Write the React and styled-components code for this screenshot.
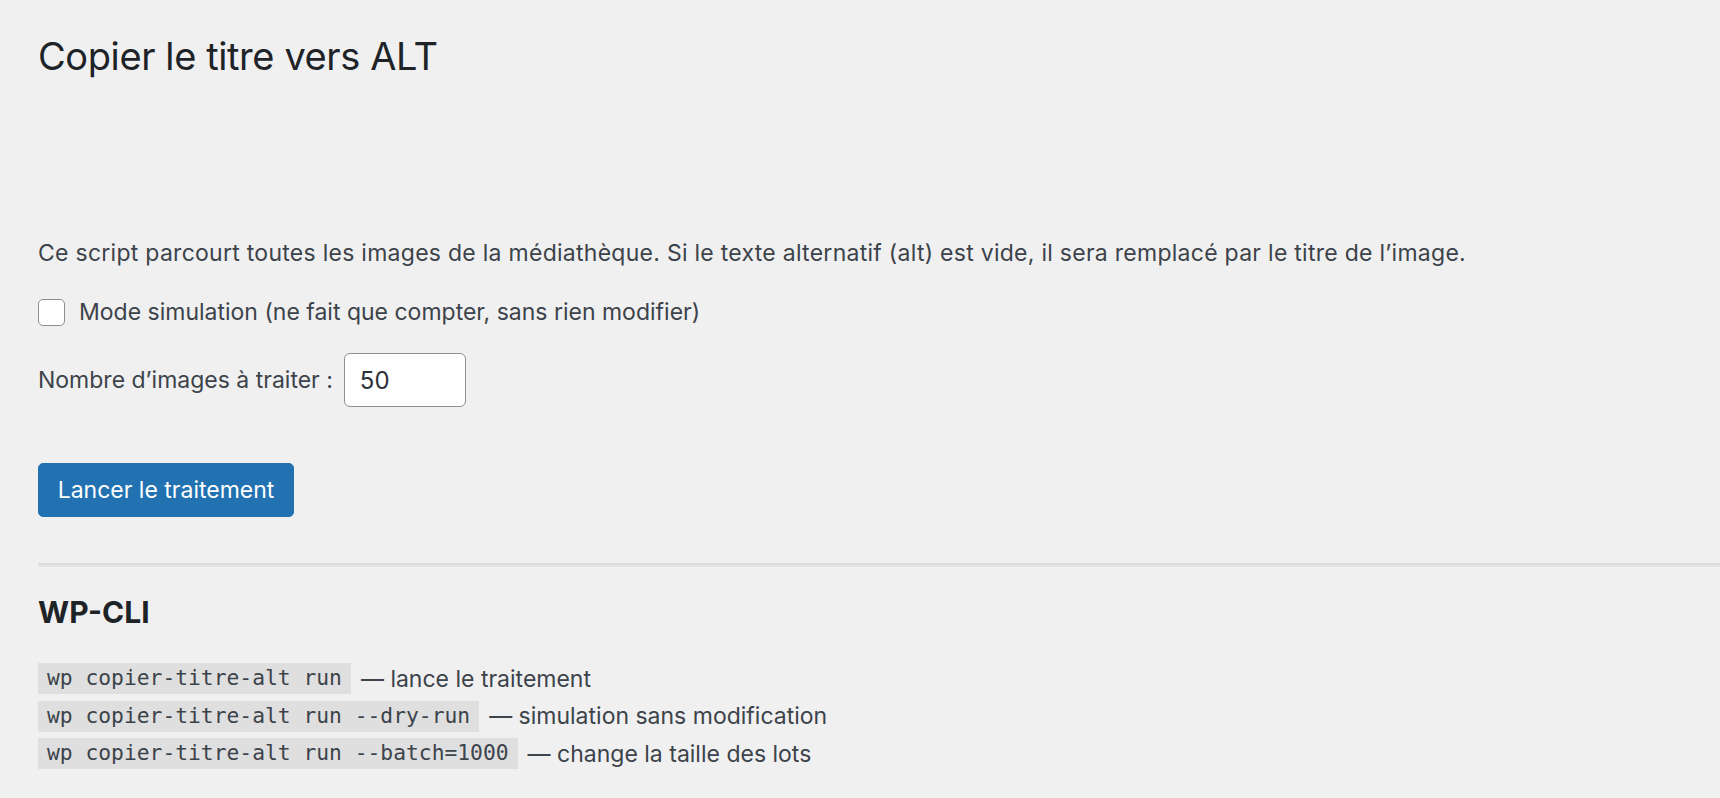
import React from 'react';
import styled, { createGlobalStyle } from 'styled-components';

const GlobalStyle = createGlobalStyle`
  html, body {
    margin: 0;
    padding: 0;
    background: #f0f0f1;
  }

  body {
    font-family: Inter, 'Liberation Sans', sans-serif;
    color: #3c434a;
  }
`;

const Wrap = styled.div`
  padding: 31px 0 30px 38px;
`;

const Title = styled.h1`
  margin: 0;
  font-size: 38px;
  font-weight: 400;
  line-height: 50px;
  letter-spacing: -0.4px;
  color: #1d2327;
`;

const Intro = styled.p`
  margin: 156px 0 0;
  font-size: 23px;
  line-height: 32px;
  letter-spacing: 0.27px;
`;

const Row = styled.div`
  display: flex;
  align-items: center;
  gap: ${(props) => props.gap || 14}px;
  margin-top: ${(props) => props.top || 0}px;
  font-size: 23px;
`;

const Check = styled.input`
  appearance: none;
  width: 27px;
  height: 27px;
  margin: 0;
  background: #fff;
  border: 1px solid #8c8f94;
  border-radius: 5px;
  box-sizing: border-box;
`;

const NumberInput = styled.input`
  width: 122px;
  height: 54px;
  box-sizing: border-box;
  margin: 0;
  padding: 0 15px;
  font-family: Inter, 'Liberation Sans', sans-serif;
  font-size: 24px;
  color: #2c3338;
  background: #fff;
  border: 1px solid #8c8f94;
  border-radius: 6px;
  outline: none;
`;

const Button = styled.button`
  display: block;
  margin-top: 56px;
  width: 256px;
  height: 54px;
  padding: 0;
  text-align: center;
  white-space: nowrap;
  font-family: Inter, 'Liberation Sans', sans-serif;
  font-size: 23px;
  color: #fff;
  background: #2271b1;
  border: 1px solid #2271b1;
  border-radius: 5px;
  cursor: pointer;
`;

const Divider = styled.hr`
  margin: 46px 0 0;
  height: 0;
  border: 0;
  border-top: 2px solid #dcdcde;
  border-bottom: 2px solid #e6e6e8;
`;

const SubTitle = styled.h2`
  margin: 27px 0 0;
  font-size: 30px;
  font-weight: 700;
  line-height: 36px;
  color: #1d2327;
`;

const CliList = styled.div`
  margin-top: 30px;
`;

const CliRow = styled.div`
  display: flex;
  align-items: center;
  height: 37.5px;
  font-size: 23px;
`;

const Code = styled.code`
  padding: 3px 9px;
  font-family: 'DejaVu Sans Mono', 'Liberation Mono', monospace;
  font-size: 21.3px;
  line-height: 24.8px;
  color: #3c434a;
  background: rgba(0, 0, 0, 0.07);
  margin-right: 10px;
`;

const commands = [
  ['wp copier-titre-alt run', '— lance le traitement'],
  ['wp copier-titre-alt run --dry-run', '— simulation sans modification'],
  ['wp copier-titre-alt run --batch=1000', '— change la taille des lots'],
];

export default function App() {
  return (
    <>
      <GlobalStyle />
      <Wrap>
        <Title>Copier le titre vers ALT</Title>
        <Intro>
          Ce script parcourt toutes les images de la médiathèque. Si le texte alternatif (alt) est vide, il sera remplacé par le titre de l’image.
        </Intro>
        <Row top={29}>
          <Check type="checkbox" id="dry" />
          <label htmlFor="dry">Mode simulation (ne fait que compter, sans rien modifier)</label>
        </Row>
        <Row top={27} gap={11}>
          <label htmlFor="batch">Nombre d’images à traiter :</label>
          <NumberInput id="batch" type="text" defaultValue="50" />
        </Row>
        <Button type="button">Lancer le traitement</Button>
        <Divider />
        <SubTitle>WP-CLI</SubTitle>
        <CliList>
          {commands.map(([cmd, text]) => (
            <CliRow key={cmd}>
              <Code>{cmd}</Code>
              <span>{text}</span>
            </CliRow>
          ))}
        </CliList>
      </Wrap>
    </>
  );
}
